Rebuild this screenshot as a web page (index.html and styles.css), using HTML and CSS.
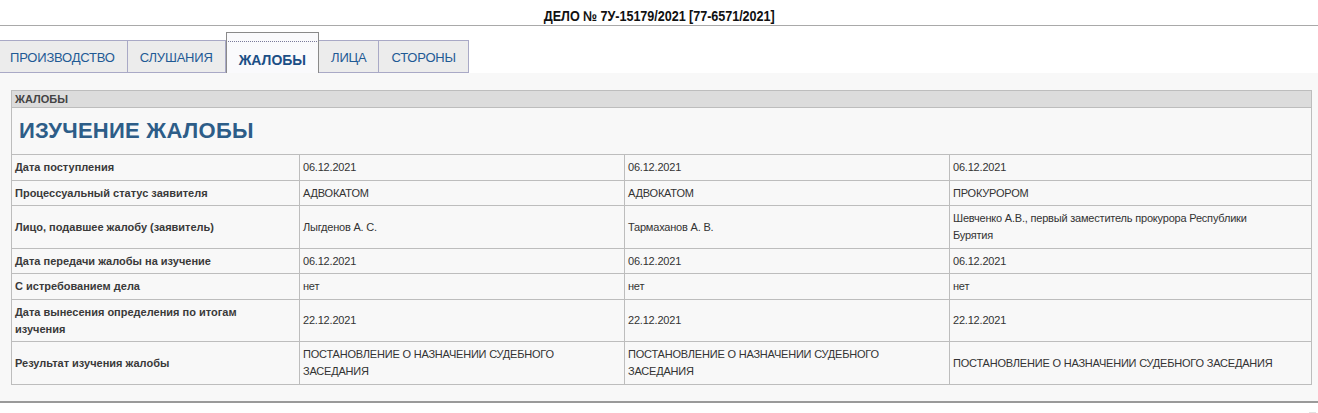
FILE: index.html
```html
<!DOCTYPE html>
<html lang="ru">
<head>
<meta charset="utf-8">
<title>Дело</title>
<link rel="stylesheet" href="styles.css">
</head>
<body>
<div class="case-title"><span class="case-text">ДЕЛО № 7У-15179/2021 [77-6571/2021]</span></div>
<div class="tabs">
  <div class="tab first">ПРОИЗВОДСТВО</div>
  <div class="tab">СЛУШАНИЯ</div>
  <div class="tab active"><span class="focus">ЖАЛОБЫ</span></div>
  <div class="tab">ЛИЦА</div>
  <div class="tab">СТОРОНЫ</div>
</div>
<div class="panel">
  <table class="grid">
    <colgroup>
      <col class="c-label">
      <col class="c-val">
      <col class="c-val">
      <col class="c-last">
    </colgroup>
    <tr class="head-row"><td colspan="4">ЖАЛОБЫ</td></tr>
    <tr class="title-row"><td colspan="4"><h2>ИЗУЧЕНИЕ ЖАЛОБЫ</h2></td></tr>
    <tr><th>Дата поступления</th><td>06.12.2021</td><td>06.12.2021</td><td class="last">06.12.2021</td></tr>
    <tr><th>Процессуальный статус заявителя</th><td>АДВОКАТОМ</td><td>АДВОКАТОМ</td><td class="last">ПРОКУРОРОМ</td></tr>
    <tr><th>Лицо, подавшее жалобу (заявитель)</th><td>Лыгденов А. С.</td><td>Тармаханов А. В.</td><td class="last">Шевченко А.В., первый заместитель прокурора Республики Бурятия</td></tr>
    <tr><th>Дата передачи жалобы на изучение</th><td>06.12.2021</td><td>06.12.2021</td><td class="last">06.12.2021</td></tr>
    <tr><th>С истребованием дела</th><td>нет</td><td>нет</td><td class="last">нет</td></tr>
    <tr><th>Дата вынесения определения по итогам изучения</th><td>22.12.2021</td><td>22.12.2021</td><td class="last">22.12.2021</td></tr>
    <tr><th>Результат изучения жалобы</th><td>ПОСТАНОВЛЕНИЕ О НАЗНАЧЕНИИ СУДЕБНОГО ЗАСЕДАНИЯ</td><td>ПОСТАНОВЛЕНИЕ О НАЗНАЧЕНИИ СУДЕБНОГО ЗАСЕДАНИЯ</td><td class="last">ПОСТАНОВЛЕНИЕ О НАЗНАЧЕНИИ СУДЕБНОГО ЗАСЕДАНИЯ</td></tr>
  </table>
</div>
<div class="grip"></div>
</body>
</html>
```
FILE: styles.css
```css
html, body {
  margin: 0;
  padding: 0;
  background: #ffffff;
  font-family: "Liberation Sans", Arial, sans-serif;
}
.case-title {
  height: 25px;
  line-height: 32px;
  text-align: center;
  font-family: "Liberation Sans", Arial, sans-serif;
  font-weight: bold;
  font-size: 14px;
  color: #111;
  border-bottom: 1px solid #a9a9a9;
  overflow: hidden;
}
.case-text {
  display: inline-block;
  transform: scaleX(0.9);
  letter-spacing: -0.05px;
}
.tabs {
  display: flex;
  align-items: flex-end;
  height: 47px;
  overflow: hidden;
}
.tab {
  box-sizing: border-box;
  height: 33px;
  line-height: 34px;
  padding: 0 12px;
  background: #ececec;
  border: 1px solid #a9a9c6;
  border-left: none;
  color: #1f5a95;
  font-size: 13px;
  letter-spacing: -0.2px;
}
.tab.first {
  margin-left: -2px;
}
.tab.active {
  height: 42px;
  margin-bottom: -1px;
  padding: 0;
  background: #fafafc;
  border: 1px solid #8a8a8a;
  border-bottom: none;
  position: relative;
  z-index: 1;
  letter-spacing: 0;
}
.tab.active .focus {
  display: block;
  margin: 8px 1px 0 1px;
  height: 32px;
  line-height: 37px;
  padding: 0 11px;
  border-top: 1px dotted #7a7a9a;
  border-bottom: 1px dotted #7a7a9a;
  font-weight: bold;
  color: #1c4f86;
  font-size: 14px;
}
.panel {
  background: #f8f8f8;
  padding: 17px 7px 16px 11px;
  border-bottom: 2px solid #9a9a9a;
}
.grid {
  width: 1300px;
  border-collapse: collapse;
  table-layout: fixed;
  font-size: 11px;
  color: #333;
}
.c-label { width: 288px; }
.c-val { width: 325px; }
.c-last { width: 362px; }
.grid td, .grid th {
  border: 1px solid #bdbdbd;
  padding: 4px 3px 3.5px 3px;
  line-height: 17px;
  text-align: left;
  vertical-align: middle;
}
.grid td {
  letter-spacing: -0.2px;
}
.grid td.last {
  padding-right: 30px;
}
.grid th {
  font-weight: bold;
  color: #3a3a3a;
  padding-right: 14px;
}
.head-row td {
  background: #dcdcdc;
  font-weight: bold;
  color: #444;
  padding: 0 3px;
  height: 16px;
  line-height: 16px;
  letter-spacing: 0;
}
.title-row td {
  padding: 0 7px;
  height: 46px;
  letter-spacing: 0;
}
.title-row h2 {
  margin: 0;
  font-size: 22px;
  line-height: 26px;
  font-weight: bold;
  color: #2d5d88;
  letter-spacing: 0.25px;
}
.grip {
  margin: 9px 2px 0 auto;
  width: 7px;
  height: 5px;
  border-top: 1px solid #e2e2e2;
  border-bottom: 1px solid #e2e2e2;
}
```
